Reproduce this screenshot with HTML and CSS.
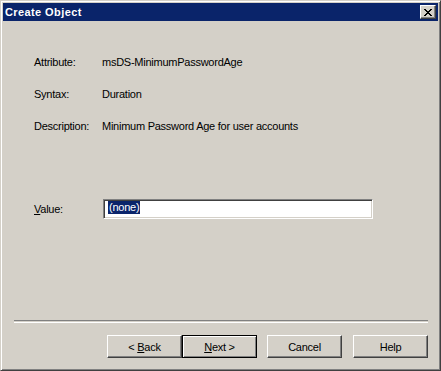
FILE: index.html
```html
<!DOCTYPE html>
<html lang="en">
    <head>
        <meta charset="utf-8">
        <title>Create Object</title>
        <link rel="stylesheet" href="styles.css">
    </head>
    <body>
        <div class="window">
            <div class="titlebar">
                <span class="title">Create Object</span>
                <span class="close">
                    <svg width="8" height="7" viewBox="0 0 8 7" shape-rendering="crispEdges">
                        <g fill="#000">
                            <rect x="0" y="0" width="2" height="1"/><rect x="6" y="0" width="2" height="1"/>
                            <rect x="1" y="1" width="2" height="1"/><rect x="5" y="1" width="2" height="1"/>
                            <rect x="2" y="2" width="4" height="1"/>
                            <rect x="3" y="3" width="2" height="1"/>
                            <rect x="2" y="4" width="4" height="1"/>
                            <rect x="1" y="5" width="2" height="1"/><rect x="5" y="5" width="2" height="1"/>
                            <rect x="0" y="6" width="2" height="1"/><rect x="6" y="6" width="2" height="1"/>
                        </g>
                    </svg>
                </span>
            </div>
            <div class="content">
                <div class="info">
                    <div class="row"><span class="label">Attribute:</span><span>msDS-MinimumPasswordAge</span></div>
                    <div class="row"><span class="label">Syntax:</span><span>Duration</span></div>
                    <div class="row"><span class="label">Description:</span><span>Minimum Password Age for user accounts</span></div>
                </div>
                <div class="value-row">
                    <label class="label"><u>V</u>alue:</label>
                    <div class="textbox"><span class="selected">(none)</span></div>
                </div>
                <div class="separator"></div>
                <div class="buttons">
                    <button class="btn"><span>&lt; <u>B</u>ack</span></button>
                    <button class="btn default"><span><u>N</u>ext &gt;</span></button>
                    <button class="btn cancel"><span>Cancel</span></button>
                    <button class="btn help"><span>Help</span></button>
                </div>
            </div>
        </div>
    </body>
</html>
```

FILE: styles.css
```css
body{
    margin:0;
    background-color:#d4d0c8;
    font-family:"Liberation Sans",Arial,sans-serif;
    font-size:11px;
    letter-spacing:-0.25px;
    color:#000;
}
.window{
    width:441px;
    height:371px;
    box-sizing:border-box;
    padding:2px;
    border:1px solid;
    border-color:#d4d0c8 #404040 #404040 #d4d0c8;
    box-shadow:inset 1px 1px #fff,inset -1px -1px #808080;
    background-color:#d4d0c8;
    display:flex;
    flex-direction:column;
}
.titlebar{
    height:18px;
    background-color:#0a246a;
    display:flex;
    align-items:center;
    justify-content:space-between;
    padding:0 2px;
}
.title{
    color:#fff;
    font-weight:bold;
    font-size:11px;
    letter-spacing:0.4px;
    line-height:13px;
}
.close{
    width:16px;
    height:14px;
    box-sizing:border-box;
    border:1px solid;
    border-color:#fff #404040 #404040 #fff;
    box-shadow:inset -1px -1px #808080;
    background-color:#d4d0c8;
    display:flex;
    align-items:center;
    justify-content:center;
}
.close svg{
    display:block;
    margin-left:-1px;
}
.content{
    flex:1;
    display:flex;
    flex-direction:column;
    padding:0 10px 10px 11px;
}
.info{
    display:flex;
    flex-direction:column;
    gap:19px;
    margin-top:35px;
    padding-left:20px;
}
.row{
    display:flex;
    line-height:13px;
    white-space:nowrap;
}
.label{
    width:68px;
    flex-shrink:0;
}
.value-row{
    display:flex;
    align-items:center;
    margin-top:66px;
    padding-left:20px;
    line-height:13px;
}
.value-row .label{
    width:69px;
}
.textbox{
    width:270px;
    height:20px;
    box-sizing:border-box;
    background-color:#fff;
    border:1px solid;
    border-color:#808080 #fff #fff #808080;
    box-shadow:inset 1px 1px #404040,inset -1px -1px #d4d0c8;
    padding:1px 3px 0 4px;
}
.selected{
    display:inline-block;
    background-color:#0a246a;
    color:#fff;
    line-height:13px;
    padding:0 1px;
}
.separator{
    margin-top:auto;
    height:1px;
    border-top:1px solid #808080;
    border-bottom:1px solid #fff;
    margin-bottom:12px;
}
.buttons{
    display:flex;
    justify-content:flex-end;
}
.btn{
    width:75px;
    height:23px;
    box-sizing:border-box;
    background-color:#d4d0c8;
    border:1px solid;
    border-color:#fff #404040 #404040 #fff;
    box-shadow:inset -1px -1px #808080;
    font-family:"Liberation Sans",Arial,sans-serif;
    font-size:11px;
    letter-spacing:-0.25px;
    color:#000;
    padding:0;
    margin:0;
}
.btn.default{
    border-color:#000;
    box-shadow:inset 1px 1px #fff,inset -1px -1px #808080;
}
.btn.cancel{
    margin-left:10px;
}
.btn.help{
    margin-left:11px;
}
```
